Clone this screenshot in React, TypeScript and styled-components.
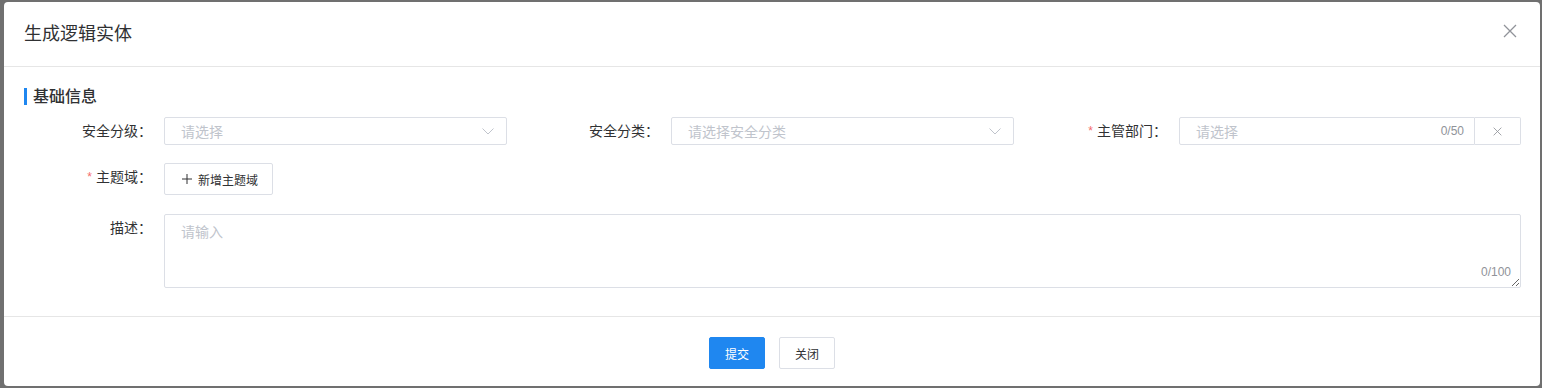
import React from "react";
import styled, { createGlobalStyle } from "styled-components";

const GlobalStyle = createGlobalStyle`
  html, body { margin: 0; padding: 0; }
  body {
    background: #707070;
    font-family: "Liberation Sans", "Noto Sans CJK SC", sans-serif;
    color: #303133;
  }
  * { box-sizing: border-box; }
`;

const Overlay = styled.div`
  height: 388px;
  padding: 2px 2px 2px 4px;
`;

const Modal = styled.div`
  height: 384px;
  background: #fff;
  border-radius: 4px;
  display: flex;
  flex-direction: column;
`;

const Header = styled.div`
  height: 65px;
  border-bottom: 1px solid #e6e6e6;
  padding: 0 22px 0 20px;
  display: flex;
  align-items: center;
  justify-content: space-between;
`;

const Title = styled.div`
  font-size: 18px;
  color: #303133;
  line-height: 24px;
`;

const CloseBtn = styled.button`
  border: none;
  background: none;
  padding: 0;
  width: 16px;
  height: 16px;
  display: flex;
  align-items: center;
  justify-content: center;
  margin-top: -6px;
  cursor: pointer;
`;

const Body = styled.div`
  padding: 21px 19px 28px 0;
`;

const SectionTitle = styled.div`
  margin: 0 0 12px 20px;
  border-left: 3px solid #1f87f0;
  padding-left: 6px;
  font-size: 16px;
  line-height: 17px;
  font-weight: 500;
  color: #303133;
`;

const FormRow = styled.div<{ $cols: string; $mb?: number }>`
  display: grid;
  grid-template-columns: ${(p) => p.$cols};
  align-items: start;
  margin-bottom: ${(p) => p.$mb ?? 0}px;
`;

const Label = styled.label`
  text-align: right;
  padding-right: 12px;
  font-size: 14px;
  line-height: 28px;
  color: #303133;
  white-space: nowrap;
`;

const Star = styled.span`
  color: #f56c6c;
  margin-right: 4px;
  font-size: 12px;
  vertical-align: top;
`;

const SelectBox = styled.div`
  height: 28px;
  border: 1px solid #dcdfe6;
  border-radius: 2px;
  display: flex;
  align-items: center;
  justify-content: space-between;
  padding: 0 12px 0 16px;
  background: #fff;
`;

const Placeholder = styled.span`
  font-size: 14px;
  color: #c0c4cc;
`;

const InputGroup = styled.div`
  display: flex;
  height: 28px;
`;

const InputBox = styled.div`
  flex: 1;
  border: 1px solid #dcdfe6;
  border-radius: 2px 0 0 2px;
  display: flex;
  align-items: center;
  justify-content: space-between;
  padding: 0 10px 0 16px;
`;

const Counter = styled.span`
  font-size: 12px;
  color: #909399;
`;

const Append = styled.button`
  width: 46px;
  border: 1px solid #dcdfe6;
  border-left: none;
  border-radius: 0 2px 2px 0;
  background: #fff;
  display: flex;
  align-items: center;
  justify-content: center;
  padding: 0;
`;

const AddButton = styled.button`
  height: 32px;
  width: 109px;
  border: 1px solid #dcdfe6;
  border-radius: 2px;
  background: #fff;
  display: flex;
  align-items: center;
  gap: 6px;
  padding: 0 0 0 17px;
  font-family: inherit;
  font-size: 12px;
  color: #303133;
`;

const TextAreaWrap = styled.div`
  position: relative;
  height: 74px;
`;

const TextArea = styled.textarea`
  width: 100%;
  height: 74px;
  border: 1px solid #dcdfe6;
  border-radius: 2px;
  padding: 6px 16px;
  font-family: inherit;
  font-size: 14px;
  line-height: 22px;
  resize: vertical;
  outline: none;
  display: block;
  &::placeholder { color: #c0c4cc; }
`;

const TextCounter = styled(Counter)`
  position: absolute;
  right: 10px;
  bottom: 9px;
  line-height: 14px;
`;

const Footer = styled.div`
  border-top: 1px solid #e6e6e6;
  padding: 20px 0 0;
  display: flex;
  justify-content: center;
  gap: 14px;
`;

const FooterButton = styled.button<{ $primary?: boolean }>`
  width: 56px;
  height: 32px;
  border-radius: 2px;
  font-family: inherit;
  font-size: 12px;
  border: 1px solid ${(p) => (p.$primary ? "#1f87f0" : "#dcdfe6")};
  background: ${(p) => (p.$primary ? "#1f87f0" : "#fff")};
  color: ${(p) => (p.$primary ? "#fff" : "#303133")};
  padding: 0;
`;

const Chevron = () => (
  <svg width="12" height="7" viewBox="0 0 12 7" fill="none">
    <path d="M0.5 0.5 L6 6 L11.5 0.5" stroke="#c0c4cc" strokeWidth="1" />
  </svg>
);

const XIcon = ({ size, color }: { size: number; color: string }) => (
  <svg width={size} height={size} viewBox="0 0 14 14" fill="none">
    <path d="M1 1 L13 13 M13 1 L1 13" stroke={color} strokeWidth="1.3" />
  </svg>
);

const PlusIcon = () => (
  <svg width="10" height="10" viewBox="0 0 10 10" fill="none">
    <path d="M5 0 V10 M0 5 H10" stroke="#303133" strokeWidth="1" />
  </svg>
);

export default function App() {
  return (
    <>
      <GlobalStyle />
      <Overlay>
        <Modal>
          <Header>
            <Title>生成逻辑实体</Title>
            <CloseBtn aria-label="close">
              <XIcon size={14} color="#909399" />
            </CloseBtn>
          </Header>
          <Body>
            <SectionTitle>基础信息</SectionTitle>
            <FormRow $cols="160px 343px 164px 343px 165px 342px" $mb={18}>
              <Label>安全分级：</Label>
              <SelectBox>
                <Placeholder>请选择</Placeholder>
                <Chevron />
              </SelectBox>
              <Label>安全分类：</Label>
              <SelectBox>
                <Placeholder>请选择安全分类</Placeholder>
                <Chevron />
              </SelectBox>
              <Label>
                <Star>*</Star>主管部门：
              </Label>
              <InputGroup>
                <InputBox>
                  <Placeholder>请选择</Placeholder>
                  <Counter>0/50</Counter>
                </InputBox>
                <Append aria-label="clear">
                  <XIcon size={9} color="#909399" />
                </Append>
              </InputGroup>
            </FormRow>
            <FormRow $cols="160px 1fr" $mb={19}>
              <Label>
                <Star>*</Star>主题域：
              </Label>
              <div>
                <AddButton>
                  <PlusIcon />
                  新增主题域
                </AddButton>
              </div>
            </FormRow>
            <FormRow $cols="160px 1fr">
              <Label>描述：</Label>
              <TextAreaWrap>
                <TextArea placeholder="请输入" />
                <TextCounter>0/100</TextCounter>
              </TextAreaWrap>
            </FormRow>
          </Body>
          <Footer>
            <FooterButton $primary>提交</FooterButton>
            <FooterButton>关闭</FooterButton>
          </Footer>
        </Modal>
      </Overlay>
    </>
  );
}
